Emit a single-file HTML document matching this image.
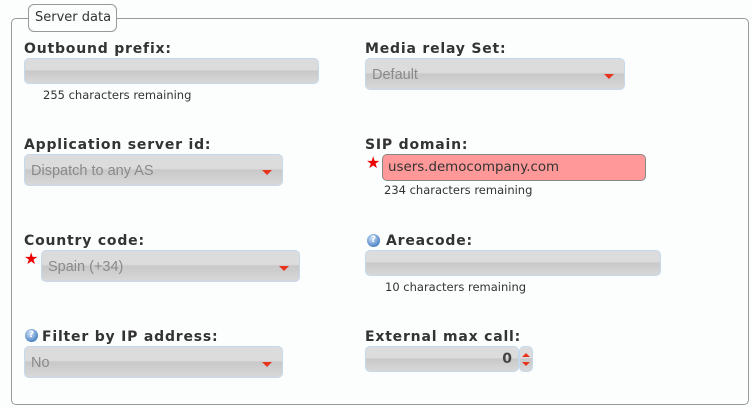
<!DOCTYPE html>
<html><head><style>
body{margin:0;width:752px;height:408px;background:#fcfdfd;position:relative;overflow:hidden;font-family:"DejaVu Sans",sans-serif;color:#333}
.fs{position:absolute;left:11px;top:18px;width:736px;height:385px;border:1px solid #999;border-radius:5px}
.lg{position:absolute;left:28px;top:4px;width:87px;height:26px;border:1px solid #999;border-radius:6px;background:#fcfdfd;font-size:13px;line-height:26px;text-indent:6px}
.lb{position:absolute;font-weight:bold;font-size:14px;letter-spacing:0.8px}
.in{position:absolute;box-sizing:border-box;border:1px solid #c5d9ec;border-radius:5px;background:linear-gradient(#dcdcdc 0,#dcdcdc 45%,#c8c8c8 50%,#d8d8d8 100%)}
.sel{font-family:"Liberation Sans",sans-serif;font-size:14.5px;color:#8a8a8a;padding-left:6px;line-height:33px}
.arr{position:absolute;right:10px;top:15px;width:0;height:0;border-left:5px solid transparent;border-right:5px solid transparent;border-top:5px solid #e8341c}
.rem{position:absolute;font-size:11.5px;color:#333}
.star{position:absolute;color:#e00;font-size:16px}
.q{position:absolute;width:13px;height:13px;border-radius:50%;background:radial-gradient(circle at 40% 35%,#cfe3f7,#4f86c6 70%,#2c5d9a);color:#fff;font-size:9px;font-weight:bold;text-align:center;line-height:13px}
</style></head><body>
<div class="fs"></div>
<div class="lg">Server data</div>

<div class="lb" style="left:24px;top:41px">Outbound prefix:</div>
<div class="in" style="left:24px;top:58px;width:295px;height:26px"></div>
<div class="rem" style="left:43px;top:88px">255 characters remaining</div>

<div class="lb" style="left:24px;top:137px">Application server id:</div>
<div class="in sel" style="left:24px;top:154px;width:259px;height:32px">Dispatch to any AS<div class="arr"></div></div>

<div class="lb" style="left:24px;top:233px">Country code:</div>
<div class="star" style="left:24px;top:249px">★</div>
<div class="in sel" style="left:41px;top:250px;width:259px;height:32px">Spain (+34)<div class="arr"></div></div>

<div class="q" style="left:25px;top:329px">?</div>
<div class="lb" style="left:42px;top:329px">Filter by IP address:</div>
<div class="in sel" style="left:24px;top:346px;width:259px;height:32px">No<div class="arr"></div></div>

<div class="lb" style="left:365px;top:41px">Media relay Set:</div>
<div class="in sel" style="left:365px;top:58px;width:260px;height:32px">Default<div class="arr"></div></div>

<div class="lb" style="left:365px;top:137px">SIP domain:</div>
<div class="star" style="left:366px;top:153px">★</div>
<div style="position:absolute;box-sizing:border-box;left:382px;top:154px;width:264px;height:27px;border:1px solid #888;border-radius:5px;background:#f99;font-size:13.4px;color:#333;padding-left:5px;line-height:26px">users.democompany.com</div>
<div class="rem" style="left:384px;top:183px">234 characters remaining</div>

<div class="q" style="left:367px;top:234px">?</div>
<div class="lb" style="left:386px;top:233px">Areacode:</div>
<div class="in" style="left:365px;top:250px;width:296px;height:26px"></div>
<div class="rem" style="left:385px;top:280px">10 characters remaining</div>

<div class="lb" style="left:365px;top:329px">External max call:</div>
<div class="in" style="left:365px;top:346px;width:154px;height:26px;text-align:right;font-weight:bold;font-size:14px;color:#444;line-height:25px;padding-right:6px">0</div>
<div class="in" style="left:519px;top:346px;width:14px;height:26px">
<div style="position:absolute;left:2px;top:6px;border-left:4px solid transparent;border-right:4px solid transparent;border-bottom:4px solid #e8341c"></div>
<div style="position:absolute;left:2px;top:15px;border-left:4px solid transparent;border-right:4px solid transparent;border-top:4px solid #e8341c"></div>
</div>
</body></html>
